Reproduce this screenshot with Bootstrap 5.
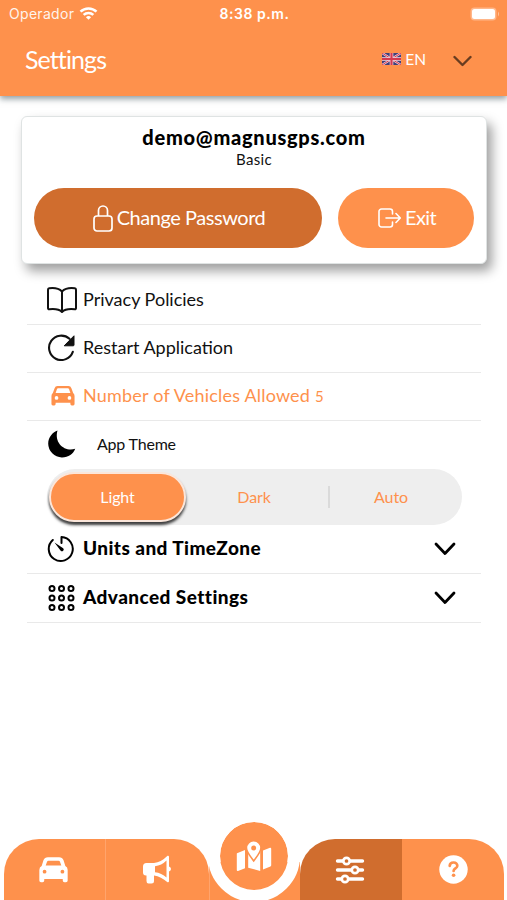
<!DOCTYPE html>
<html lang="en">
<head>
<meta charset="utf-8">
<meta name="viewport" content="width=device-width, initial-scale=1">
<title>Settings</title>
<link href="https://cdn.jsdelivr.net/npm/bootstrap@5.3.0/dist/css/bootstrap.min.css" rel="stylesheet">
<style>
:root{--brand:#fe914c;--brand-dark:#d06d2e}
body{font-family:Lato,"Liberation Sans",sans-serif;color:#111;height:900px;overflow:hidden;background:#fff}
svg{display:block;flex:none}
.top{background:var(--brand);height:96px;box-shadow:0 3px 6px rgba(60,80,90,.55);color:#fff}
.status{height:27px;font-family:Inter,"Liberation Sans",sans-serif;font-size:14px;padding:0 7px 0 9px}
.status .side{flex:1 1 0}
.operator{letter-spacing:.3px;opacity:.9}
.operator,.wave{margin-right:1px}
.clock{font-weight:600;letter-spacing:.55px}
.titlebar{height:68px;padding:0 35px 0 25px}
.title{font-size:25px;letter-spacing:-.9px;margin-top:-2px}
.lang{font-size:15.500px;line-height:1;margin:-3px 27px 0 4px}
.flag{margin-top:-4px}
.account{margin:20px 20px 0 21px;height:148px;border:1px solid #dfe3e3;border-radius:6px;box-shadow:5px 7px 12px rgba(0,0,0,.38);padding:8px 12px 0;background:#fff}
.mail{font-weight:900;font-size:20px;line-height:24px;letter-spacing:.73px;color:#000}
.plan{font-size:15px;line-height:20px;letter-spacing:.3px}
.pill{height:60px;border-radius:30px;color:#fff;font-size:20px;line-height:1;padding:0 0 3px 2px;border:0}
.pill svg{margin-top:3px}
.pill-dark{background:var(--brand-dark);width:288px;letter-spacing:-.45px}
.pill-light{background:var(--brand);width:136px;letter-spacing:-.6px}
.pills{margin:19px 0 0}
.rows{margin:13px 26px 0 27px}
.line{height:48px;border-bottom:1px solid #e9e9e9;padding:0 25px 2px 20px;font-size:18px}
.line .glyph{width:36px;flex:none}
.line.bare{border:0}
.heavy{font-weight:900;font-size:19px;color:#000;height:49px;letter-spacing:.43px}
.heavy svg{position:relative;top:1px}
.orange{color:var(--brand)}
.vehicles{letter-spacing:.2px}
.count{font-size:15px}
.theme{font-size:16px;letter-spacing:-.2px;margin-left:14px}
.segments{height:56px;border-radius:28px;background:#eee;margin:0 19px 0 20px;font-size:16px;color:var(--brand);letter-spacing:-.1px}
.seg{width:136px;padding-bottom:1px}
.seg.last{width:138px}
.seg.chosen{width:137px;height:50px;border-radius:25px;background:var(--brand);color:#fff;border:2px solid #fbe6da;box-shadow:0 3px 3px rgba(0,0,0,.75);margin-left:2px}
.split{border-left:2px solid #dadada;height:22px;margin:0 -8px 0 6px}
.tabs{height:61px;padding:0 3px 0 4px}
.tab{background:var(--brand);height:61px}
.tab svg{margin-right:2px}
.side-left{width:102px;border-radius:35px 0 0 0;border-right:1px solid #ffa46c}
.side-next{width:103px;border-radius:0 35px 0 0}
.middle{width:91px;height:38px;border-left:1px solid #ffa46c}
.active-tab{width:102px;border-radius:35px 0 0 0;background:var(--brand-dark)}
.side-right{width:102px;border-radius:0 35px 0 0}
.disc{width:92px;height:92px;border:12px solid #fff;background:var(--brand);background-clip:padding-box;border-radius:50%;left:208px;bottom:-2px}
</style>
<script src="https://cdn.jsdelivr.net/npm/bootstrap@5.3.0/dist/js/bootstrap.bundle.min.js"></script>
</head>
<body class="d-flex flex-column position-relative">
<header class="top">
  <div class="status d-flex align-items-center">
    <div class="side d-flex align-items-center gap-1"><span class="operator">Operador</span>
      <svg class="wave" width="19" height="15" viewBox="0 0 20 15" fill="none" stroke="#fff" stroke-width="2.700"><path d="M1.600 5.600a12 12 0 0 1 16.800 0M4.900 9a7.300 7.300 0 0 1 10.200 0"/><path d="M10 14.200 7.300 11.400a3.900 3.900 0 0 1 5.400 0Z" fill="#fff" stroke="none"/></svg></div>
    <div class="clock">8:38 p.m.</div>
    <div class="side d-flex justify-content-end"><svg width="30" height="14" viewBox="0 0 30 14"><rect x=".5" y=".5" width="26" height="13" rx="4" fill="#ffb78a"/><rect x="2" y="2" width="23" height="10" rx="2.500" fill="#fff"/><path d="M28 4.500q2 2.500 0 5Z" fill="#ffc39c"/></svg></div>
  </div>
  <div class="titlebar d-flex align-items-center justify-content-between">
    <div class="title">Settings</div>
    <div class="d-flex align-items-center">
      <svg class="flag" width="19" height="12" viewBox="0 0 19 12"><path fill="#414078" d="M0 0h19v12H0z"/><path d="m0 0 19 12M19 0 0 12" stroke="#f5d5dc" stroke-width="2.200"/><path d="m0 0 19 12M19 0 0 12" stroke="#d43a50" stroke-width="1"/><path d="M9.500 0v12M0 6h19" stroke="#f5d5dc" stroke-width="3.600"/><path d="M9.500 0v12M0 6h19" stroke="#d43a50" stroke-width="2.200"/></svg>
      <span class="lang">EN</span>
      <svg width="19" height="12" viewBox="0 0 19 12" fill="none" stroke="#683c20" stroke-width="2.400" stroke-linecap="round" stroke-linejoin="round"><path d="m1.500 2 8 8 8-8"/></svg>
    </div>
  </div>
</header>
<section class="account">
  <div class="mail text-center">demo@magnusgps.com</div>
  <div class="plan text-center">Basic</div>
  <div class="pills d-flex justify-content-between">
    <button class="btn pill pill-dark d-flex align-items-center justify-content-center"><svg width="20" height="27" viewBox="0 0 20 27" fill="none" stroke="#fff" stroke-width="1.700"><rect x="1" y="11" width="18" height="15" rx="3"/><path d="M5.500 11V5.500a4.500 4.500 0 0 1 9 0V11"/></svg><span class="ms-1">Change Password</span></button>
    <button class="btn pill pill-light d-flex align-items-center justify-content-center"><svg width="23" height="20" viewBox="0 0 23 20" fill="none" stroke="#fff" stroke-width="1.600" stroke-linecap="round" stroke-linejoin="round"><path d="M14.500 6V3.500a2.500 2.500 0 0 0-2.500-2.500H3.500A2.500 2.500 0 0 0 1 3.500v13A2.500 2.500 0 0 0 3.500 19H12a2.500 2.500 0 0 0 2.500-2.500V14M8 10h14M18 5.500l4.300 4.500-4.300 4.500"/></svg><span class="ms-1">Exit</span></button>
  </div>
</section>
<main class="rows">
  <div class="line d-flex align-items-center">
    <span class="glyph"><svg width="30" height="26" viewBox="0 0 30 26" fill="none" stroke="#111" stroke-width="2" stroke-linejoin="round"><path d="M15 4.500C12 1.500 6 .8 2.200 1.300Q1 1.500 1 2.800V21q0 1.300 1.300 1.200C7 21.700 12 21.800 15 25c3-3.200 8-3.300 12.700-2.800Q29 22.300 29 21V2.800q0-1.300-1.200-1.500C24 .8 18 1.500 15 4.500ZM15 4.500V24"/></svg></span>
    <span>Privacy Policies</span></div>
  <div class="line d-flex align-items-center">
    <span class="glyph"><svg width="29" height="27" viewBox="0 0 29 27"><path d="M25.800 17.800A12.200 12.200 0 1 1 22.500 4.800" fill="none" stroke="#111" stroke-width="2.100" stroke-linecap="round"/><path d="M27 1.800v9.200q0 .8-.8.800h-9Z" fill="#111" stroke="#111" stroke-linejoin="round"/></svg></span>
    <span>Restart Application</span></div>
  <div class="line orange d-flex align-items-center">
    <span class="glyph"><svg class="ms-1" width="24" height="21" viewBox="0 0 26 22" preserveAspectRatio="none"><path fill="currentColor" fill-rule="evenodd" d="M7 1h12q2.300 0 3.100 2.300L24 8.500q1.500 1 1.500 3V20q0 1.500-1.500 1.500h-1.500Q21 21.500 21 20v-1.500H5V20q0 1.500-1.500 1.500H2Q.5 21.500.5 20v-8.500q0-2 1.500-3l1.900-5.200Q4.700 1 7 1ZM5 8.300h16l-1.500-4.200q-.3-.8-1.200-.8H7.700q-.9 0-1.200.8ZM6 11.500a2 2 0 1 0 0 4 2 2 0 0 0 0-4Zm14 0a2 2 0 1 0 0 4 2 2 0 0 0 0-4Z"/></svg></span>
    <span class="vehicles">Number of Vehicles Allowed <span class="count">5</span></span></div>
  <div class="line bare d-flex align-items-center">
    <span class="glyph"><svg width="30" height="30" viewBox="0 0 30 30"><path fill="#000" d="M10.500 1.500C6 3 1.200 8 1.200 14.800a14 14 0 0 0 13.600 13.700c6.500.1 11.700-3.800 13.400-8.700-9.700 3.500-21.500-5.300-17.700-18.300Z"/></svg></span>
    <span class="theme">App Theme</span></div>
  <div class="segments d-flex align-items-center text-center">
    <div class="seg chosen d-flex align-items-center justify-content-center">Light</div>
    <div class="seg">Dark</div>
    <div class="split"></div>
    <div class="seg last">Auto</div>
  </div>
  <div class="line heavy d-flex align-items-center">
    <span class="glyph"><svg width="29" height="28" viewBox="0 0 29 28" fill="none" stroke="#000" stroke-width="2" stroke-linecap="round" stroke-linejoin="round"><path d="M5.800 5A12 12 0 1 0 14.500 2v6"/><path d="m7.500 7.500 8.700 5.700q1.200 1.400 0 2.500-1.300 1.200-2.500 0Z" fill="#000" stroke="none"/></svg></span>
    <span>Units and TimeZone</span>
    <svg class="ms-auto" width="22" height="14" viewBox="0 0 22 14" fill="none" stroke="#000" stroke-width="2.800" stroke-linecap="round" stroke-linejoin="round"><path d="m2 2 9 9.500L20 2"/></svg></div>
  <div class="line heavy d-flex align-items-center">
    <span class="glyph"><svg width="29" height="28" viewBox="0 0 29 28" fill="none" stroke="#000" stroke-width="2"><g id="dots"><circle cx="5" cy="4.500" r="2.500"/><circle cx="14.500" cy="4.500" r="2.500"/><circle cx="24" cy="4.500" r="2.500"/></g><use href="#dots" y="9.500"/><use href="#dots" y="19"/></svg></span>
    <span>Advanced Settings</span>
    <svg class="ms-auto" width="22" height="14" viewBox="0 0 22 14" fill="none" stroke="#000" stroke-width="2.800" stroke-linecap="round" stroke-linejoin="round"><path d="m2 2 9 9.500L20 2"/></svg></div>
</main>
<nav class="tabs d-flex align-items-end mt-auto">
  <div class="tab side-left d-flex align-items-center justify-content-center"><svg width="29" height="26" viewBox="0 0 26 23"><path fill="#fff" fill-rule="evenodd" d="M8 0h10q3 0 4 2.800L23.600 8q2.100 1 2.100 3.500V21q0 1.500-1.500 1.500h-1.400q-1.500 0-1.500-1.500v-1.500H4.700V21q0 1.500-1.500 1.500H1.800Q.3 22.500.3 21v-9.500Q.3 9 2.400 8L4 2.800Q5 0 8 0ZM6 7.500h14l-1.200-3.400q-.3-.9-1.300-.9h-9q-1 0-1.300.9ZM5 11.300a1.700 1.700 0 1 0 0 3.400 1.700 1.700 0 0 0 0-3.400Zm16 0a1.700 1.700 0 1 0 0 3.400 1.700 1.700 0 0 0 0-3.400Z"/></svg></div>
  <div class="tab side-next d-flex align-items-center justify-content-center"><svg width="30" height="29" viewBox="0 0 30 29"><path fill="#fff" fill-rule="evenodd" d="M25.500.8q1.500-.5 1.500 1.200v9.500q2 .7 2 2.500t-2 2.500V26q0 1.700-1.500 1.200-6.500-5.500-13.500-6.700V26q0 2.500-2.500 2.500h-3Q4.500 28.500 4.500 26v-5.500H4q-3 0-3-3v-6q0-3.500 3.500-3.500H12Q19 7.500 25.500.8ZM24.500 5.500q-5 5-11.500 5.700v6.100Q19.500 18 24.500 22.500Z"/></svg></div>
  <div class="tab middle"></div>
  <div class="tab active-tab d-flex align-items-center justify-content-center"><svg width="30" height="28" viewBox="0 0 30 28" fill="none" stroke="#fff" stroke-width="3.400" stroke-linecap="round"><path d="M2.500 5h25M2.500 14h25M2.500 23h25"/><g fill="#d06d2e" stroke-width="2.700"><circle cx="11.500" cy="5" r="3.200"/><circle cx="20" cy="14" r="3.200"/><circle cx="10" cy="23" r="3.200"/></g></svg></div>
  <div class="tab side-right d-flex align-items-center justify-content-center"><svg class="me-0" width="29" height="29" viewBox="0 0 29 29"><circle cx="14.500" cy="14.500" r="14.200" fill="#fff"/><path d="M10.700 10.800c.3-4.600 8-4.200 7.600.2-.2 2.400-3.700 2.500-3.700 4.900" fill="none" stroke="#fe914c" stroke-width="2.700" stroke-linecap="round"/><circle cx="14.600" cy="20.300" r="1.800" fill="#fe914c"/></svg></div>
</nav>
<div class="disc position-absolute d-flex align-items-center justify-content-center">
  <svg width="36" height="32" viewBox="0 0 36 32"><g fill="#fff"><path d="M1 13.300 9 10v18.200L2 31q-1.200.3-1.200-1V14Q.8 13.500 1 13.300ZM12.200 10.500h12V31l-12-3.300ZM27 10.500 34 7.800q1.200-.3 1.200 1v16.500q0 .8-.8 1.100L27 29.500Z"/></g><path d="M17.700.8a7 7 0 0 1 7.200 7.200c0 4-4 8.500-7.200 13-3.200-4.500-7.200-9-7.200-13A7 7 0 0 1 17.700.8Z" fill="#fff" stroke="#fe914c" stroke-width="1.500"/><circle cx="17.700" cy="8" r="2.500" fill="#fe914c"/></svg>
</div>
</body>
</html>
